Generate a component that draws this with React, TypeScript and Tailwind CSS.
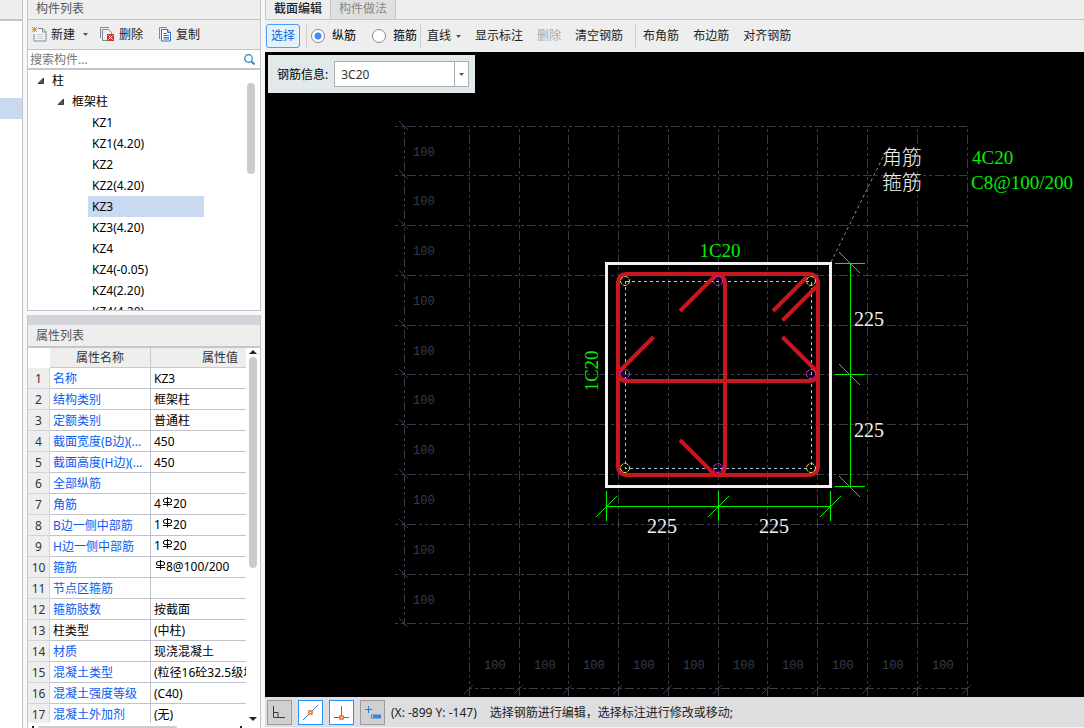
import { useState } from 'react';
import type { ReactNode } from 'react';

const treeItems = [
  'KZ1',
  'KZ1(4.20)',
  'KZ2',
  'KZ2(4.20)',
  'KZ3',
  'KZ3(4.20)',
  'KZ4',
  'KZ4(-0.05)',
  'KZ4(2.20)',
  'KZ4(4.20)',
];

// "#" in a value stands for the HRB400 rebar grade symbol.
const properties: { name: string; value: string; plain?: boolean }[] = [
  { name: '名称', value: 'KZ3' },
  { name: '结构类别', value: '框架柱' },
  { name: '定额类别', value: '普通柱' },
  { name: '截面宽度(B边)(...', value: '450' },
  { name: '截面高度(H边)(...', value: '450' },
  { name: '全部纵筋', value: '' },
  { name: '角筋', value: '4#20' },
  { name: 'B边一侧中部筋', value: '1#20' },
  { name: 'H边一侧中部筋', value: '1#20' },
  { name: '箍筋', value: '#8@100/200' },
  { name: '节点区箍筋', value: '' },
  { name: '箍筋肢数', value: '按截面' },
  { name: '柱类型', value: '(中柱)', plain: true },
  { name: '材质', value: '现浇混凝土' },
  { name: '混凝土类型', value: '(粒径16砼32.5级坍落度)' },
  { name: '混凝土强度等级', value: '(C40)' },
  { name: '混凝土外加剂', value: '(无)' },
];

const gridX = [469, 519, 568, 618, 668, 718, 767, 817, 867, 917, 967];
const gridY = [126, 175, 225, 275, 325, 374, 424, 474, 524, 574, 623];

function Caret() {
  return (
    <svg className="h-[3px] w-[5px]" viewBox="0 0 5 3" aria-hidden="true">
      <path d="M0 0h5L2.5 3z" fill="#555" />
    </svg>
  );
}

function NewIcon() {
  return (
    <svg className="size-[15px]" viewBox="0 0 15 15" fill="none" aria-hidden="true">
      <path d="M6 1.5h5l3 3v9.500h-12V7" fill="#f4f4f4" stroke="#7d8c94" />
      <path d="M10.500 1.500v3.500H14" stroke="#7d8c94" />
      <path d="M4.500 7.500h7M4.500 9.500h7M4.500 11.500h7" stroke="#ccd3d8" />
      <path d="M0 0l5 5M5 0L0 5M2.500 0v5M0 2.500h5" stroke="#f09a1a" />
    </svg>
  );
}

function DeleteIcon() {
  return (
    <svg className="size-[15px]" viewBox="0 0 15 15" fill="none" aria-hidden="true">
      <path d="M.5 11V.5H9" stroke="#7d8c94" />
      <path d="M7 13.500H2.500v-11h6l3 3V7" stroke="#7d8c94" />
      <path d="M7 7h7v7H7z" fill="#cf3636" />
      <path d="M8.500 8.500l4 4M12.500 8.500l-4 4" stroke="#fff" />
    </svg>
  );
}

function CopyIcon() {
  return (
    <svg className="h-[15px] w-[13px]" viewBox="0 0 13 15" fill="none" aria-hidden="true">
      <path d="M.5 12V.5H8" stroke="#7d8c94" />
      <path d="M2.500 2.500h6l3 3v8.500h-9z" fill="#fff" stroke="#2c6fd0" />
      <path d="M8.500 2.500v3h3M4.500 6.500h3M4.500 8.500h5.500M4.500 10.500h5.500M4.500 12h5.500" stroke="#2c6fd0" />
    </svg>
  );
}

function SearchIcon() {
  return (
    <svg className="h-[11px] w-[11px]" viewBox="0 0 11 11" fill="none" stroke="#1f7fc0" aria-hidden="true">
      <circle cx="4.500" cy="4.500" r="3.800" strokeWidth="1.200" />
      <path d="M7.300 7.300L10.500 10.500" strokeWidth="1.800" />
    </svg>
  );
}

function RebarSymbol() {
  return (
    <svg
      className="mr-px ml-[2px] inline-block h-[10px] w-[9px] align-[1px]"
      viewBox="0 0 9 10"
      fill="none"
      stroke="#000"
      role="img"
      aria-label="HRB400"
    >
      <path d="M4.500 0v9.500M0 7.500h9" />
      <path d="M2.500 1.500h4q2 0 2 1.500v1q0 1.500-2 1.500h-4Q.5 5.500.5 4V3Q.5 1.500 2.500 1.500z" />
    </svg>
  );
}

function Expander() {
  return (
    <svg className="size-[7px]" viewBox="0 0 7 7" aria-hidden="true">
      <path d="M6.500 1v5.500H1z" fill="#555" stroke="#222" strokeWidth="0.800" />
    </svg>
  );
}

function ToolButton({ children, disabled }: { children: ReactNode; disabled?: boolean }) {
  return (
    <button type="button" disabled={disabled} className="flex items-center whitespace-nowrap text-[#222] disabled:text-[#aaa]">
      {children}
    </button>
  );
}

function Separator() {
  return <span className="h-6 w-px shrink-0 bg-[#cfcfcf]" />;
}

function ComponentPanel() {
  const [selected, setSelected] = useState('KZ3');
  return (
    <section className="flex h-[311px] shrink-0 flex-col border-x border-b border-[#c0c3c9] bg-white">
      <h2 className="flex h-5 shrink-0 items-center border-b border-[#bfc3c8] bg-[#eee] px-2 pb-[2px] text-[#555]">构件列表</h2>
      <div className="flex h-[30px] shrink-0 items-center border-b border-[#bfc3c8] bg-[#eee] px-1">
        <button type="button" className="flex items-center gap-1 text-[#222]">
          <NewIcon />
          新建
          <span className="flex w-3 justify-center">
            <Caret />
          </span>
        </button>
        <button type="button" className="ml-[9px] flex items-center gap-1 text-[#222]">
          <DeleteIcon />
          删除
        </button>
        <button type="button" className="ml-4 flex items-center gap-1 text-[#222]">
          <CopyIcon />
          复制
        </button>
      </div>
      <div className="flex h-5 shrink-0 items-center border-b-2 border-[#c3c6cc] pr-[5px]">
        <input
          type="text"
          aria-label="搜索构件"
          placeholder="搜索构件..."
          className="min-w-0 flex-1 px-[2px] pt-[2px] leading-4 outline-none placeholder:text-[#777]"
        />
        <button type="button" aria-label="搜索">
          <SearchIcon />
        </button>
      </div>
      <div className="flex min-h-0 flex-1 overflow-hidden pr-[5px]">
        <ul className="min-w-0 flex-1 text-black">
          <li className="flex h-[21px] items-center gap-2 pl-[9px]">
            <Expander />柱
          </li>
          <li className="flex h-[21px] items-center gap-2 pl-[29px]">
            <Expander />
            框架柱
          </li>
          {treeItems.map((item) => (
            <li key={item} className="pl-[60px]">
              <button
                type="button"
                onClick={() => setSelected(item)}
                className={`block h-[21px] w-[116px] px-1 text-left ${item === selected ? 'bg-[#c9d9ef]' : ''}`}
              >
                {item}
              </button>
            </li>
          ))}
        </ul>
        <span className="mt-[13px] h-[91px] w-2 rounded-full bg-[#cbcbcb]" />
      </div>
    </section>
  );
}

function PropertyPanel() {
  return (
    <section className="flex min-h-0 flex-1 flex-col border-x border-[#c0c3c9] bg-white">
      <div className="h-[10px] shrink-0 bg-[#d3d4da]" />
      <h2 className="flex h-[23px] shrink-0 items-center border-b-2 border-[#c3c6cc] bg-[#eee] px-2 text-[#555]">属性列表</h2>
      <div className="flex min-h-0 flex-1">
        <div className="min-w-0 flex-1 overflow-hidden">
          <table className="w-[274px] table-fixed border-separate border-spacing-0">
            <thead>
              <tr className="h-5 text-[#333]">
                <th className="w-[22px] bg-white p-0" aria-label="序号" />
                <th className="w-[101px] border-r border-b border-[#c8cad0] bg-[#eee] p-0 pt-px leading-[18px] font-normal">属性名称</th>
                <th className="border-b border-[#c8cad0] bg-[#eee] p-0 pt-px pr-[13px] leading-[18px] font-normal">属性值</th>
              </tr>
            </thead>
            <tbody>
              {properties.map((row, i) => {
                const parts = row.value.split('#');
                return (
                  <tr key={row.name} className="h-[21px] whitespace-nowrap">
                    <td className="border-r border-b border-[#d2d4d8] bg-[#eee] p-0 pt-[2px] text-center leading-[18px] text-[#333]">
                      {i + 1}
                    </td>
                    <td
                      className={`overflow-hidden border-r border-b border-[#c0c3ca] p-0 pt-[2px] pl-[3px] leading-[18px] ${
                        row.plain ? 'text-black' : 'text-[#0a5cf0]'
                      }`}
                    >
                      {row.name}
                    </td>
                    <td
                      className={`overflow-hidden border-b border-[#c0c3ca] p-0 pl-[3px] leading-[18px] text-black ${
                        parts.length > 1 ? '' : 'pt-[2px]'
                      }`}
                    >
                      {parts[0]}
                      {parts.length > 1 && <RebarSymbol />}
                      {parts[1]}
                    </td>
                  </tr>
                );
              })}
            </tbody>
          </table>
        </div>
        <div className="flex w-[14px] shrink-0 flex-col items-center pt-[2px] pb-[2px]">
          <svg className="h-1 w-2" viewBox="0 0 8 4" aria-hidden="true">
            <path d="M0 4h8L4 0z" fill="#222" />
          </svg>
          <span className="mt-[3px] h-[211px] w-2 rounded-full bg-[#cbcbcb]" />
          <svg className="mt-auto h-1 w-2" viewBox="0 0 8 4" aria-hidden="true">
            <path d="M0 0h8L4 4z" fill="#222" />
          </svg>
        </div>
      </div>
      <div className="flex h-[5px] shrink-0 items-end overflow-hidden pr-[18px] pl-1">
        <span className="h-[2px] w-[2px] bg-[#222]" />
        <span className="ml-1 h-[2px] w-[139px] rounded-t bg-[#cbcbcb]" />
        <span className="ml-auto h-[2px] w-[2px] bg-[#222]" />
      </div>
    </section>
  );
}

function SectionDrawing() {
  const dashes = '3 3 3 3 9 3';
  const verticalDashes = '3 3 9 3 3 3';
  const serif = 'font-["Liberation_Serif","Noto_Sans_CJK_SC",serif]';
  return (
    <svg
      className="block size-full"
      viewBox="265 52 819 645"
      preserveAspectRatio="xMinYMin meet"
      fill="none"
      role="img"
      aria-label="柱截面配筋图"
    >
      <g stroke="#363d4a" shapeRendering="crispEdges">
        {gridY.map((y) => (
          <path key={y} d={`M395 ${y + 0.5}H967`} strokeDasharray={dashes} />
        ))}
        {gridX.map((x) => (
          <path key={x} d={`M${x + 0.5} 129V697`} strokeDasharray={verticalDashes} />
        ))}
        <path d="M404.500 126V626" strokeDasharray={dashes} />
        <path d="M469 688.500H967" strokeDasharray={dashes} />
        {gridY.map((y) => (
          <path key={y} d={`M399 ${y - 5}l9 9`} />
        ))}
        {gridX.map((x) => (
          <path key={x} d={`M${x - 5} 694l9 -9`} />
        ))}
      </g>
      <g className='font-["Liberation_Mono",monospace] text-[12px]' fill="#363d4a">
        {gridY.slice(0, 10).map((y) => (
          <text key={y} x="413" y={y + 30}>
            100
          </text>
        ))}
        {gridX.slice(0, 10).map((x) => (
          <text key={x} x={x + 15} y="669">
            100
          </text>
        ))}
      </g>

      <rect x="606.500" y="263.500" width="224" height="223" stroke="#f2f2f2" strokeWidth="3" />
      <rect x="625.500" y="281.500" width="186" height="187" stroke="#a9c6e6" strokeDasharray="3 3" shapeRendering="crispEdges" />

      <g stroke="#c8171e" strokeWidth="4">
        <rect x="618" y="274" width="200" height="201" rx="8" />
        <path d="M680 311L714 277Q718 272 722 276Q725 279 725 284V465Q725 471 722 474Q718 477 714 474L680 440" />
        <path d="M653.500 337L621 369.500Q616 374 619 378Q622 381 627 381H809Q814 381 817 378Q820 374 815 369.500L782.500 337" />
        <path d="M773 311L807 277M782.500 320.500L818 285" />
      </g>

      <g stroke="#f0dc3c" strokeDasharray="4 1">
        <circle cx="625" cy="281" r="4.500" />
        <circle cx="811" cy="281" r="4.500" />
        <circle cx="625" cy="468" r="4.500" />
        <circle cx="811" cy="468" r="4.500" />
      </g>
      <g stroke="#f218f2" strokeDasharray="4 1">
        <circle cx="718" cy="281" r="4.500" />
        <circle cx="625" cy="374" r="4.500" />
        <circle cx="811" cy="374" r="4.500" />
        <circle cx="718" cy="468" r="4.500" />
      </g>

      <g stroke="#00f000" shapeRendering="crispEdges">
        <path d="M850.500 263V487M835 263.500h30M835 374.500h30M835 486.500h30" />
        <path d="M839 252l21 21M839 364l21 21M839 476l21 21" />
        <path d="M606 506.500H831M606.500 491v30M718.500 491v30M830.500 491v30" />
        <path d="M596 517l21 -21M708 517l21 -21M820 517l21 -21" />
      </g>
      <path d="M831 262L883 157" stroke="#8d8d8d" strokeDasharray="3 3" />

      <g className={`${serif} text-[20px] font-light`} fill="#f2f2f2">
        <text x="854" y="326">225</text>
        <text x="854" y="437">225</text>
        <text x="647" y="533">225</text>
        <text x="759" y="533">225</text>
        <text x="882" y="165">角筋</text>
        <text x="882" y="190">箍筋</text>
      </g>
      <g className={`${serif} text-[19px]`} fill="#00f000">
        <text x="720" y="257" textAnchor="middle">1C20</text>
        <text transform="translate(598 371) rotate(-90)" textAnchor="middle">1C20</text>
        <text x="972" y="164">4C20</text>
        <text x="971" y="189">C8@100/200</text>
      </g>
    </svg>
  );
}

function StatusButton({ label, active, children }: { label: string; active?: boolean; children: ReactNode }) {
  return (
    <button
      type="button"
      aria-label={label}
      aria-pressed={!!active}
      className={`flex size-[25px] shrink-0 items-center justify-center border ${
        active ? 'border-[#2a93fb] bg-white' : 'border-[#9b9b9d] bg-[#d0d0d2]'
      }`}
    >
      <svg className="size-[17px]" viewBox="0 0 17 17" fill="none">
        {children}
      </svg>
    </button>
  );
}

function Radio({ label, value, current, onPick }: { label: string; value: string; current: string; onPick: (v: string) => void }) {
  return (
    <label className="flex items-center gap-[7px] whitespace-nowrap text-black">
      <input
        type="radio"
        name="rebar-kind"
        value={value}
        checked={current === value}
        onChange={() => onPick(value)}
        className="size-[14px] appearance-none rounded-full border border-[#8a8a8a] bg-white checked:bg-[radial-gradient(circle,#3a8ff0_3px,transparent_4px)]"
      />
      {label}
    </label>
  );
}

function Editor() {
  const [kind, setKind] = useState('longitudinal');
  const [info, setInfo] = useState('3C20');
  return (
    <main className="flex min-w-0 flex-1 flex-col">
      <div role="tablist" className="flex h-5 shrink-0 border-b border-l border-[#c6c6ca] bg-[#eee]">
        <button
          type="button"
          role="tab"
          aria-selected="true"
          className="border-r border-[#c6c6ca] px-2 pb-[2px] font-medium text-[#222]"
        >
          截面编辑
        </button>
        <button
          type="button"
          role="tab"
          aria-selected="false"
          className="border-r border-[#c6c6ca] bg-[#e0e0e0] px-2 pb-[2px] text-[#888]"
        >
          构件做法
        </button>
      </div>

      <div role="toolbar" className="flex h-8 shrink-0 items-center overflow-hidden bg-[#eee] pl-px">
        <button
          type="button"
          className="mr-[6px] h-6 shrink-0 rounded-[3px] border border-[#4a9ff5] bg-[#e5f2fe] px-1 whitespace-nowrap text-[#0a6ad8]"
        >
          选择
        </button>
        <Separator />
        <div className="mr-[3px] ml-1 flex shrink-0 items-center gap-4">
          <Radio label="纵筋" value="longitudinal" current={kind} onPick={setKind} />
          <Radio label="箍筋" value="stirrup" current={kind} onPick={setKind} />
        </div>
        <Separator />
        <div className="mr-3 ml-[6px] flex shrink-0 items-center gap-[14px]">
          <ToolButton>
            直线
            <span className="ml-1 flex w-[6px] justify-end">
              <Caret />
            </span>
          </ToolButton>
          <ToolButton>显示标注</ToolButton>
          <ToolButton disabled>删除</ToolButton>
          <ToolButton>清空钢筋</ToolButton>
        </div>
        <Separator />
        <div className="ml-[7px] flex shrink-0 items-center gap-[14px]">
          <ToolButton>布角筋</ToolButton>
          <ToolButton>布边筋</ToolButton>
          <ToolButton>对齐钢筋</ToolButton>
        </div>
      </div>

      <div className="relative min-h-0 flex-1 overflow-hidden bg-black">
        <SectionDrawing />
        <div className="absolute top-[3px] left-[3px] flex h-[38px] items-center gap-[6px] bg-[#e1e9ea] pr-[6px] pl-[9px] text-black">
          <label htmlFor="rebar-info" className="pt-[2px]">
            钢筋信息:
          </label>
          <div className="flex h-[26px] w-[135px] border border-[#a9b0b3] bg-white">
            <input
              id="rebar-info"
              type="text"
              value={info}
              onChange={(e) => setInfo(e.target.value)}
              className="min-w-0 flex-1 px-[6px] pt-[2px] text-[#333] outline-none"
            />
            <button type="button" aria-label="展开" className="flex w-[14px] items-center justify-center border-l border-[#a9b0b3]">
              <Caret />
            </button>
          </div>
        </div>
      </div>

      <footer className="flex h-[31px] shrink-0 items-center gap-[6px] border-b border-[#f2f2f2] bg-[#dedee0] pl-[2px]">
        <StatusButton label="正交">
          <path d="M2.500 2v11.500H14M2.500 8.500h4.500v5" stroke="#3a3a3a" />
        </StatusButton>
        <StatusButton label="捕捉中点" active>
          <path d="M1 16L16 1" stroke="#2f7ad8" />
          <path d="M7 7h3v3H7z" fill="#fff" stroke="#f0692a" strokeWidth="1.500" />
        </StatusButton>
        <StatusButton label="捕捉垂点" active>
          <path d="M8.500 2v11M1 13.500h15" stroke="#2f7ad8" />
          <path d="M7 12h3v3H7z" fill="#fff" stroke="#f0692a" strokeWidth="1.500" />
        </StatusButton>
        <StatusButton label="动态输入">
          <path d="M4.500 2v7M1 5.500h7" stroke="#2f7ad8" />
          <path d="M7 10.500h10v4H7z" fill="#3c82d8" />
          <path d="M8.500 11.500v2" stroke="#fff" />
        </StatusButton>
        <p className="truncate pt-[2px] text-[#222]">
          <span className="mr-[13px]">(X: -899 Y: -147)</span>
          选择钢筋进行编辑，选择标注进行修改或移动;
        </p>
      </footer>
    </main>
  );
}

export default function App() {
  return (
    <div className='flex h-screen w-full overflow-hidden bg-[#f8f8f8] font-["Noto_Sans","Noto_Sans_CJK_SC",sans-serif] text-xs'>
      <aside className="flex w-[23px] shrink-0 flex-col border-r border-[#c0c3c9] bg-white">
        <div className="h-[21px] border-b-2 border-[#c3c6cc] bg-[#eee]" />
        <div className="mt-[77px] h-[21px] bg-[#c9d9ef]" />
      </aside>
      <div className="mr-1 ml-1 flex w-[234px] shrink-0 flex-col gap-1">
        <ComponentPanel />
        <PropertyPanel />
      </div>
      <Editor />
    </div>
  );
}
